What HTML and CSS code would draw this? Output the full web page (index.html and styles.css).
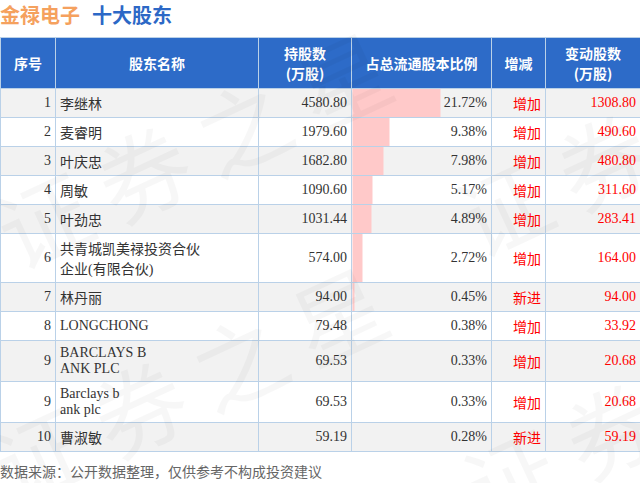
FILE: index.html
```html
<!DOCTYPE html>
<html lang="zh">
<head>
<meta charset="utf-8">
<link rel="stylesheet" href="styles.css">
</head>
<body>
<div class="page">
  <h1 class="title"><span class="t-company">金禄电子</span><span class="t-sub">十大股东</span></h1>
  <table class="holders">
    <colgroup>
      <col class="c-no"><col class="c-name"><col class="c-hold"><col class="c-pct"><col class="c-chg"><col class="c-var">
    </colgroup>
    <thead>
      <tr>
        <th>序号</th>
        <th>股东名称</th>
        <th>持股数<br>(万股)</th>
        <th>占总流通股本比例</th>
        <th>增减</th>
        <th>变动股数<br>(万股)</th>
      </tr>
    </thead>
    <tbody>
      <tr><td class="no">1</td><td class="name">李继林</td><td class="num">4580.80</td><td class="pct" style="--w:88px">21.72%</td><td class="chg">增加</td><td class="var">1308.80</td></tr>
      <tr><td class="no">2</td><td class="name">麦睿明</td><td class="num">1979.60</td><td class="pct" style="--w:37px">9.38%</td><td class="chg">增加</td><td class="var">490.60</td></tr>
      <tr><td class="no">3</td><td class="name">叶庆忠</td><td class="num">1682.80</td><td class="pct" style="--w:31px">7.98%</td><td class="chg">增加</td><td class="var">480.80</td></tr>
      <tr><td class="no">4</td><td class="name">周敏</td><td class="num">1090.60</td><td class="pct" style="--w:20px">5.17%</td><td class="chg">增加</td><td class="var">311.60</td></tr>
      <tr><td class="no">5</td><td class="name">叶劲忠</td><td class="num">1031.44</td><td class="pct" style="--w:19px">4.89%</td><td class="chg">增加</td><td class="var">283.41</td></tr>
      <tr><td class="no">6</td><td class="name">共青城凯美禄投资合伙<br>企业(有限合伙)</td><td class="num">574.00</td><td class="pct" style="--w:10px">2.72%</td><td class="chg">增加</td><td class="var">164.00</td></tr>
      <tr><td class="no">7</td><td class="name">林丹丽</td><td class="num">94.00</td><td class="pct" style="--w:2px">0.45%</td><td class="chg">新进</td><td class="var">94.00</td></tr>
      <tr><td class="no">8</td><td class="name">LONGCHONG</td><td class="num">79.48</td><td class="pct" style="--w:0px">0.38%</td><td class="chg">增加</td><td class="var">33.92</td></tr>
      <tr><td class="no">9</td><td class="name">BARCLAYS B<br>ANK PLC</td><td class="num">69.53</td><td class="pct" style="--w:0px">0.33%</td><td class="chg">增加</td><td class="var">20.68</td></tr>
      <tr><td class="no">9</td><td class="name">Barclays b<br>ank plc</td><td class="num">69.53</td><td class="pct" style="--w:0px">0.33%</td><td class="chg">增加</td><td class="var">20.68</td></tr>
      <tr><td class="no">10</td><td class="name">曹淑敏</td><td class="num">59.19</td><td class="pct" style="--w:0px">0.28%</td><td class="chg">新进</td><td class="var">59.19</td></tr>
    </tbody>
  </table>
  <p class="source">数据来源：公开数据整理，仅供参考不构成投资建议</p>
  <div class="watermark" aria-hidden="true">
    <span class="wm wm1">证券之星</span>
    <span class="wm wm2">证券之星</span>
    <span class="wm wm3">证券之星</span>
    <span class="wm wm4">证券之星</span>
  </div>
</div>
</body>
</html>
```

FILE: styles.css
```css
html, body {
  margin: 0;
  padding: 0;
  background: #fff;
}

.page {
  position: relative;
  width: 640px;
  height: 483px;
  overflow: hidden;
  font-family: "Liberation Serif", "Noto Sans CJK SC", serif;
  color: #333;
}

.title {
  margin: 0;
  height: 37px;
  line-height: 30px;
  font-family: "Noto Sans CJK SC", "Noto Sans", sans-serif;
  font-size: 20px;
  font-weight: bold;
  display: flex;
  gap: 12px;
}

.t-company { color: #f5a15e; }
.t-sub { color: #2c68c6; }

.holders {
  width: 640px;
  border-collapse: collapse;
  table-layout: fixed;
  font-size: 14px;
}

.c-no { width: 55px; }
.c-name { width: 203px; }
.c-hold { width: 93px; }
.c-pct { width: 140px; }
.c-chg { width: 54px; }
.c-var { width: 95px; }

.holders th,
.holders td {
  border: 1px solid #bad1e8;
}

.holders th {
  background: #2d6bc8;
  color: #fff;
  font-family: "Noto Sans CJK SC", "Noto Sans", sans-serif;
  font-weight: bold;
  font-size: 14px;
  line-height: 20px;
  padding: 5px 2px;
  text-align: center;
}

.holders td {
  padding: 4px 4px;
  vertical-align: middle;
}

.holders tbody tr:nth-child(odd) { background: #f2f2f2; }
.holders tbody tr:nth-child(even) { background: #fff; }

.no { text-align: right; padding-right: 5px; }
.name { text-align: left; padding-left: 5px; }
.num { text-align: right; }

.pct {
  text-align: right;
  background: linear-gradient(90deg, #ffc9c9 0, #ffc9c9 var(--w), transparent var(--w));
}

.chg {
  text-align: right;
  color: #f00;
  font-family: "Noto Sans CJK SC", sans-serif;
}

.var {
  text-align: right;
  color: #f00;
  padding-right: 5px;
}

.source {
  margin: 9px 0 0;
  font-family: "Noto Sans CJK SC", "Noto Sans", sans-serif;
  font-size: 14px;
  line-height: 20px;
  color: #666;
}

.watermark {
  position: absolute;
  inset: 0;
  pointer-events: none;
}

.wm {
  position: absolute;
  font-family: "Noto Sans CJK SC", sans-serif;
  font-size: 92px;
  line-height: 1;
  letter-spacing: 18px;
  white-space: nowrap;
  color: rgba(0, 0, 0, 0.032);
  transform: translate(-50%, -50%) rotate(-25deg);
}

.wm1 { left: 200px; top: 143px; }
.wm2 { left: 196px; top: 378px; }
.wm3 { left: 660px; top: 131px; }
.wm4 { left: 668px; top: 400px; }
```
